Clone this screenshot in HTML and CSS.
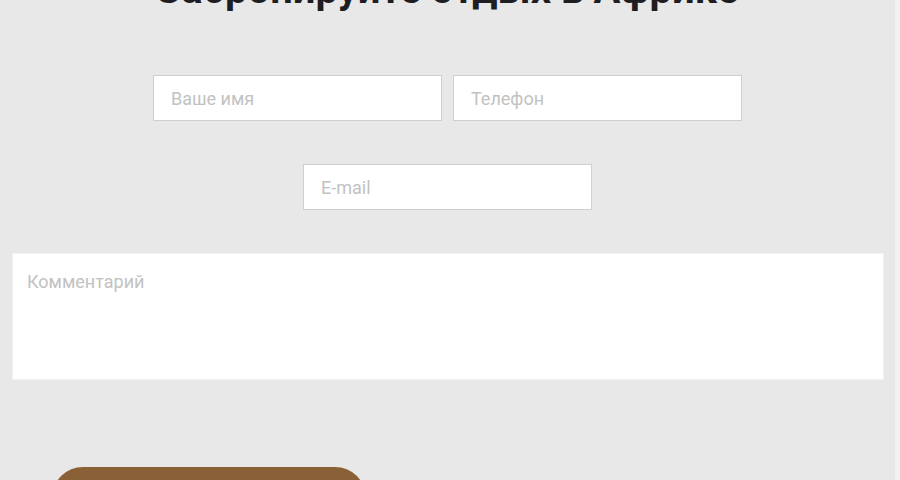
FILE: index.html
```html
<!DOCTYPE html>
<html lang="ru">
<head>
<meta charset="utf-8">
<title>Бронирование</title>
<link rel="stylesheet" href="styles.css">
</head>
<body>
<main class="page">
  <section class="booking">
    <h2 class="title">Забронируйте отдых в Африке</h2>
    <form class="form">
      <div class="row">
        <input class="field" type="text" placeholder="Ваше имя">
        <input class="field" type="text" placeholder="Телефон">
      </div>
      <div class="row row-email">
        <input class="field" type="email" placeholder="E-mail">
      </div>
      <textarea class="comment" placeholder="Комментарий"></textarea>
      <button class="submit" type="button">Отправить</button>
    </form>
  </section>
</main>
</body>
</html>
```

FILE: styles.css
```css
html, body {
  margin: 0;
  padding: 0;
  background: #f1f1f1;
  overflow: hidden;
}
.page {
  width: 895px;
  height: 480px;
  background: #e8e8e8;
  font-family: Roboto, "Noto Sans", sans-serif;
}
.booking {
  display: flex;
  flex-direction: column;
}
.title {
  margin: -34px 0 0;
  font-size: 40px;
  line-height: 47px;
  font-weight: 700;
  color: #1d1d22;
  text-align: center;
}
.form {
  display: flex;
  flex-direction: column;
  margin-top: 62px;
}
.row {
  display: flex;
  justify-content: center;
  gap: 11px;
}
.row-email {
  margin-top: 43px;
}
.field {
  box-sizing: border-box;
  width: 289px;
  height: 46px;
  margin: 0;
  padding: 0 17px;
  border: 1px solid #cfcfcf;
  background: #fff;
  font-family: Roboto, sans-serif;
  font-size: 18px;
  color: #333;
  outline: none;
}
.field::placeholder,
.comment::placeholder {
  color: #c2c2c2;
}
.comment {
  box-sizing: border-box;
  display: block;
  width: 872px;
  height: 127px;
  margin: 43px 0 0 12px;
  padding: 17px 14px;
  border: 1px solid #f2f2f2;
  background: #fff;
  font-family: Roboto, sans-serif;
  font-size: 18px;
  resize: none;
  outline: none;
}
.submit {
  align-self: flex-start;
  margin: 87px 0 0 52px;
  width: 314px;
  height: 62px;
  border: 0;
  border-radius: 31px;
  background: #8a6136;
  color: #fff;
  font-family: Roboto, sans-serif;
  font-size: 18px;
}
```
